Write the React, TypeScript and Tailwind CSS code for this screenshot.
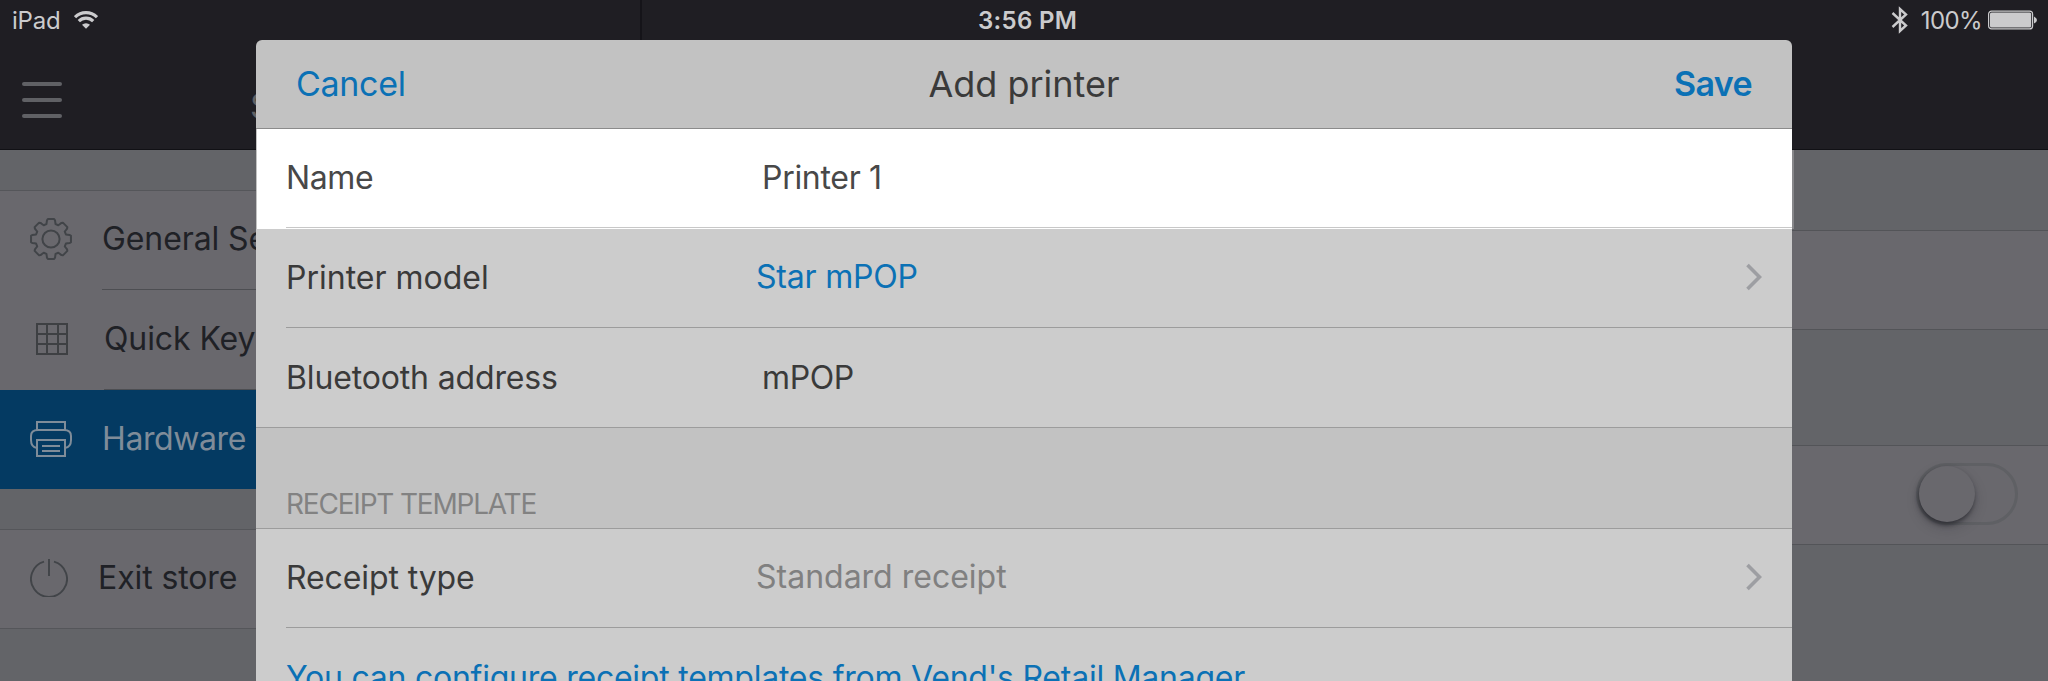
import React from "react";

const line = "bg-[#9c9c9c]";

function Chevron() {
  return (
    <svg className="ml-auto mr-[30px] mb-[2px] h-[28px] w-[16px]" viewBox="0 0 16 28" fill="none" stroke="#9d9ea2" strokeWidth="3.6">
      <path d="M1.5 2 L13.5 14 L1.5 26" />
    </svg>
  );
}

function GearIcon() {
  const pts: string[] = [];
  const teeth = 8;
  for (let i = 0; i < teeth; i++) {
    const a = (i * 360) / teeth - 90;
    const steps: [number, number][] = [
      [-17, 15.6], [-14.5, 17.2], [-12, 19.2], [-9, 20.2], [9, 20.2], [12, 19.2], [14.5, 17.2], [17, 15.6],
    ];
    for (const [d, r] of steps) {
      const t = ((a + d) * Math.PI) / 180;
      pts.push(`${(21 + r * Math.cos(t)).toFixed(2)},${(21 + r * Math.sin(t)).toFixed(2)}`);
    }
  }
  return (
    <svg className="h-[42px] w-[42px]" viewBox="0 0 42 42" fill="none" stroke="#414448" strokeWidth="2" strokeLinejoin="round">
      <polygon points={pts.join(" ")} />
      <circle cx="21" cy="21" r="8.6" />
    </svg>
  );
}

function GridIcon() {
  return (
    <svg className="h-[32px] w-[32px]" viewBox="0 0 32 32" fill="none" stroke="#3e4043" strokeWidth="2">
      <path d="M1 1H31V31H1Z M11 1V31 M22 1V31 M1 11H31 M1 21H31" />
    </svg>
  );
}

function PrinterIcon() {
  return (
    <svg className="h-[36px] w-[42px]" viewBox="0 0 42 36" fill="none" stroke="#7f8c99" strokeWidth="2">
      <path d="M7 9V1H35V9" />
      <path d="M7 27Q1 26 1 19V15Q1 9 8 9H34Q41 9 41 15V19Q41 26 35 27" />
      <path d="M7 19H35V35H7Z M12 25H30 M12 30H30" />
    </svg>
  );
}

function PowerIcon() {
  return (
    <svg className="h-[38px] w-[38px]" viewBox="0 0 38 38" fill="none" stroke="#414448" strokeWidth="1.9">
      <path d="M14 2.600A18 18 0 1 0 24 2.600 M19 0V17" />
    </svg>
  );
}

export default function App() {
  return (
    <div className="relative h-[681px] w-[2048px] overflow-hidden bg-[#636468] font-['Inter',sans-serif] text-[32px] leading-none tracking-[-0.1px] whitespace-nowrap">
      <header className="flex h-[150px] flex-col border-b border-[#111115] bg-[#1f1e23]">
        <div className="flex h-[40px] items-center text-[24px] text-[#cbcbcd]">
          <div className="flex h-[40px] w-[642px] items-center border-r-2 border-[#151419] pl-[12px]">
            <span className="pt-[2px] tracking-[-0.2px]">iPad</span>
            <svg className="ml-[13px] h-[18px] w-[24px]" viewBox="0 0 24 18" fill="none" stroke="#cbcbcd" strokeWidth="3.200">
              <path d="M1 6.200A15.500 15.500 0 0 1 23 6.200" />
              <path d="M4.800 10.200A10.200 10.200 0 0 1 19.200 10.200" />
              <path d="M12 17.800L8 13.800A5.700 5.700 0 0 1 16 13.800Z" fill="#cbcbcd" stroke="none" />
            </svg>
          </div>
          <span className="ml-[336px] pt-[2px] font-semibold tracking-[0.3px]">3:56 PM</span>
          <div className="ml-auto flex items-center pr-[11px]">
            <svg className="h-[28px] w-[18px]" viewBox="0 0 18 28" fill="none" stroke="#cbcbcd" strokeWidth="2.4">
              <path d="M1.500 7L15 19.500L9 25V3L15 8.500L1.500 21" />
            </svg>
            <span className="ml-[12px] pt-[2px] tracking-[-0.6px]">100%</span>
            <svg className="ml-[6px] h-[20px] w-[49px]" viewBox="0 0 49 20">
              <rect x="0.600" y="1.100" width="44" height="17.800" rx="3" fill="none" stroke="#cbcbcd" strokeWidth="1.200" />
              <rect x="2" y="2.500" width="41.200" height="15" rx="1.500" fill="#cbcbcd" />
              <path d="M46 6.500Q49 8 49 10T46 13.500Z" fill="#cbcbcd" />
            </svg>
          </div>
        </div>
        <div className="flex h-[109px] items-center pl-[22px] pt-[11px]">
          <div className="flex flex-col gap-[12px]">
            <span className="h-[4px] w-[40px] rounded-full bg-[#606165]" />
            <span className="h-[4px] w-[40px] rounded-full bg-[#606165]" />
            <span className="h-[4px] w-[40px] rounded-full bg-[#606165]" />
          </div>
          <span className="ml-[188px] mt-[11px] text-[34px] text-[#606165]">S</span>
        </div>
      </header>

      <div className="flex h-[531px]">
        <nav className="w-[640px] text-[#1f2126]">
          <div className="h-[41px] border-b border-[#55565a]" />
          <div className="bg-[#69686d]">
            <div className="flex h-[98px] items-center pl-[30px] pb-[2px]">
              <GearIcon />
              <span className="ml-[30px]">General Se</span>
            </div>
            <div className="ml-[102px] h-[1px] bg-[#4d4e52]" />
            <div className="flex h-[99px] items-center pl-[36px] pb-[2px]">
              <GridIcon />
              <span className="ml-[36px]">Quick Keys</span>
            </div>
            <div className="ml-[104px] h-[1px] bg-[#4d4e52]" />
          </div>
          <div className="flex h-[99px] items-center bg-[#043a62] pl-[30px] pb-px text-[#7f8c99]">
            <PrinterIcon />
            <span className="ml-[30px] tracking-[-0.4px]">Hardware</span>
          </div>
          <div className="h-[41px] border-b border-[#55565a]" />
          <div className="flex h-[99px] items-center border-b border-[#55565a] bg-[#69686d] pl-[30px] pb-[3px]">
            <PowerIcon />
            <span className="ml-[30px] pt-px">Exit store</span>
          </div>
        </nav>
        <section className="flex-1">
          <div className="h-[81px] border-b border-[#535458]" />
          <div className="h-[99px] border-b border-[#535458] bg-[#69686d]" />
          <div className="h-[116px] border-b border-[#535458]" />
          <div className="flex h-[99px] items-center justify-end border-b border-[#535458] bg-[#69686d] pr-[30px] pb-[2px]">
            <div className="h-[62px] w-[102px] rounded-full border-[3px] border-[#5f6064]">
              <div className="h-[56px] w-[56px] rounded-full bg-[#69686d] shadow-[-1px_3px_5px_rgba(20,20,26,0.6),0_6px_14px_rgba(20,20,26,0.15)]" />
            </div>
          </div>
        </section>
      </div>

      <div role="dialog" className="absolute left-[256px] top-[40px] h-[641px] w-[1536px] overflow-hidden rounded-t-[6px] bg-[#c2c2c2] text-[#3a3a3a]">
        <div className="grid h-[89px] grid-cols-3 items-center border-b border-[#8b8b8b] px-[40px] text-[34px]">
          <span className="tracking-[-0.3px] text-[#0b71b5]">Cancel</span>
          <span className="pb-px text-center text-[36px] tracking-[0px]">Add printer</span>
          <span className="text-right font-semibold tracking-[-0.6px] text-[#0b71b5]">Save</span>
        </div>
        <div className="ml-[1px] h-[100px] bg-white text-[#484848]">
          <div className="ml-[29px] flex h-[99px] items-center border-b border-[#c8c8c8]">
            <span className="w-[476px] tracking-[-0.4px]">Name</span>
            <span className="tracking-[-0.3px]">Printer 1</span>
          </div>
        </div>
        <div className="bg-[#cccccc] pl-[30px]">
          <div className="flex h-[98px] items-center">
            <span className="w-[470px] tracking-[0px]">Printer model</span>
            <span className="pb-[2px] tracking-[-0.2px] text-[#0b71b5]">Star mPOP</span>
            <Chevron />
          </div>
          <div className={`h-[1px] ${line}`} />
          <div className="flex h-[99px] items-center">
            <span className="w-[476px] tracking-[-0.15px]">Bluetooth address</span>
            <span className="tracking-[-0.4px]">mPOP</span>
          </div>
        </div>
        <div className="flex h-[102px] items-end border-y border-[#9c9c9c] pb-[10px] pl-[30px] text-[28px] tracking-[-1.2px] text-[#828282]">
          <span>RECEIPT TEMPLATE</span>
        </div>
        <div className="h-[152px] bg-[#cccccc] pl-[30px]">
          <div className="flex h-[98px] items-center">
            <span className="w-[470px]">Receipt type</span>
            <span className="pb-[2px] tracking-[0px] text-[#808080]">Standard receipt</span>
            <Chevron />
          </div>
          <div className={`h-[1px] ${line}`} />
          <div className="flex h-[99px] items-center tracking-[-0.24px] text-[#0b71b5]">
            <span>You can configure receipt templates from Vend's Retail Manager.</span>
          </div>
        </div>
      </div>
      <div className="absolute left-[1792px] top-[150px] h-[79px] w-[2px] bg-[#87878a]" />
    </div>
  );
}
